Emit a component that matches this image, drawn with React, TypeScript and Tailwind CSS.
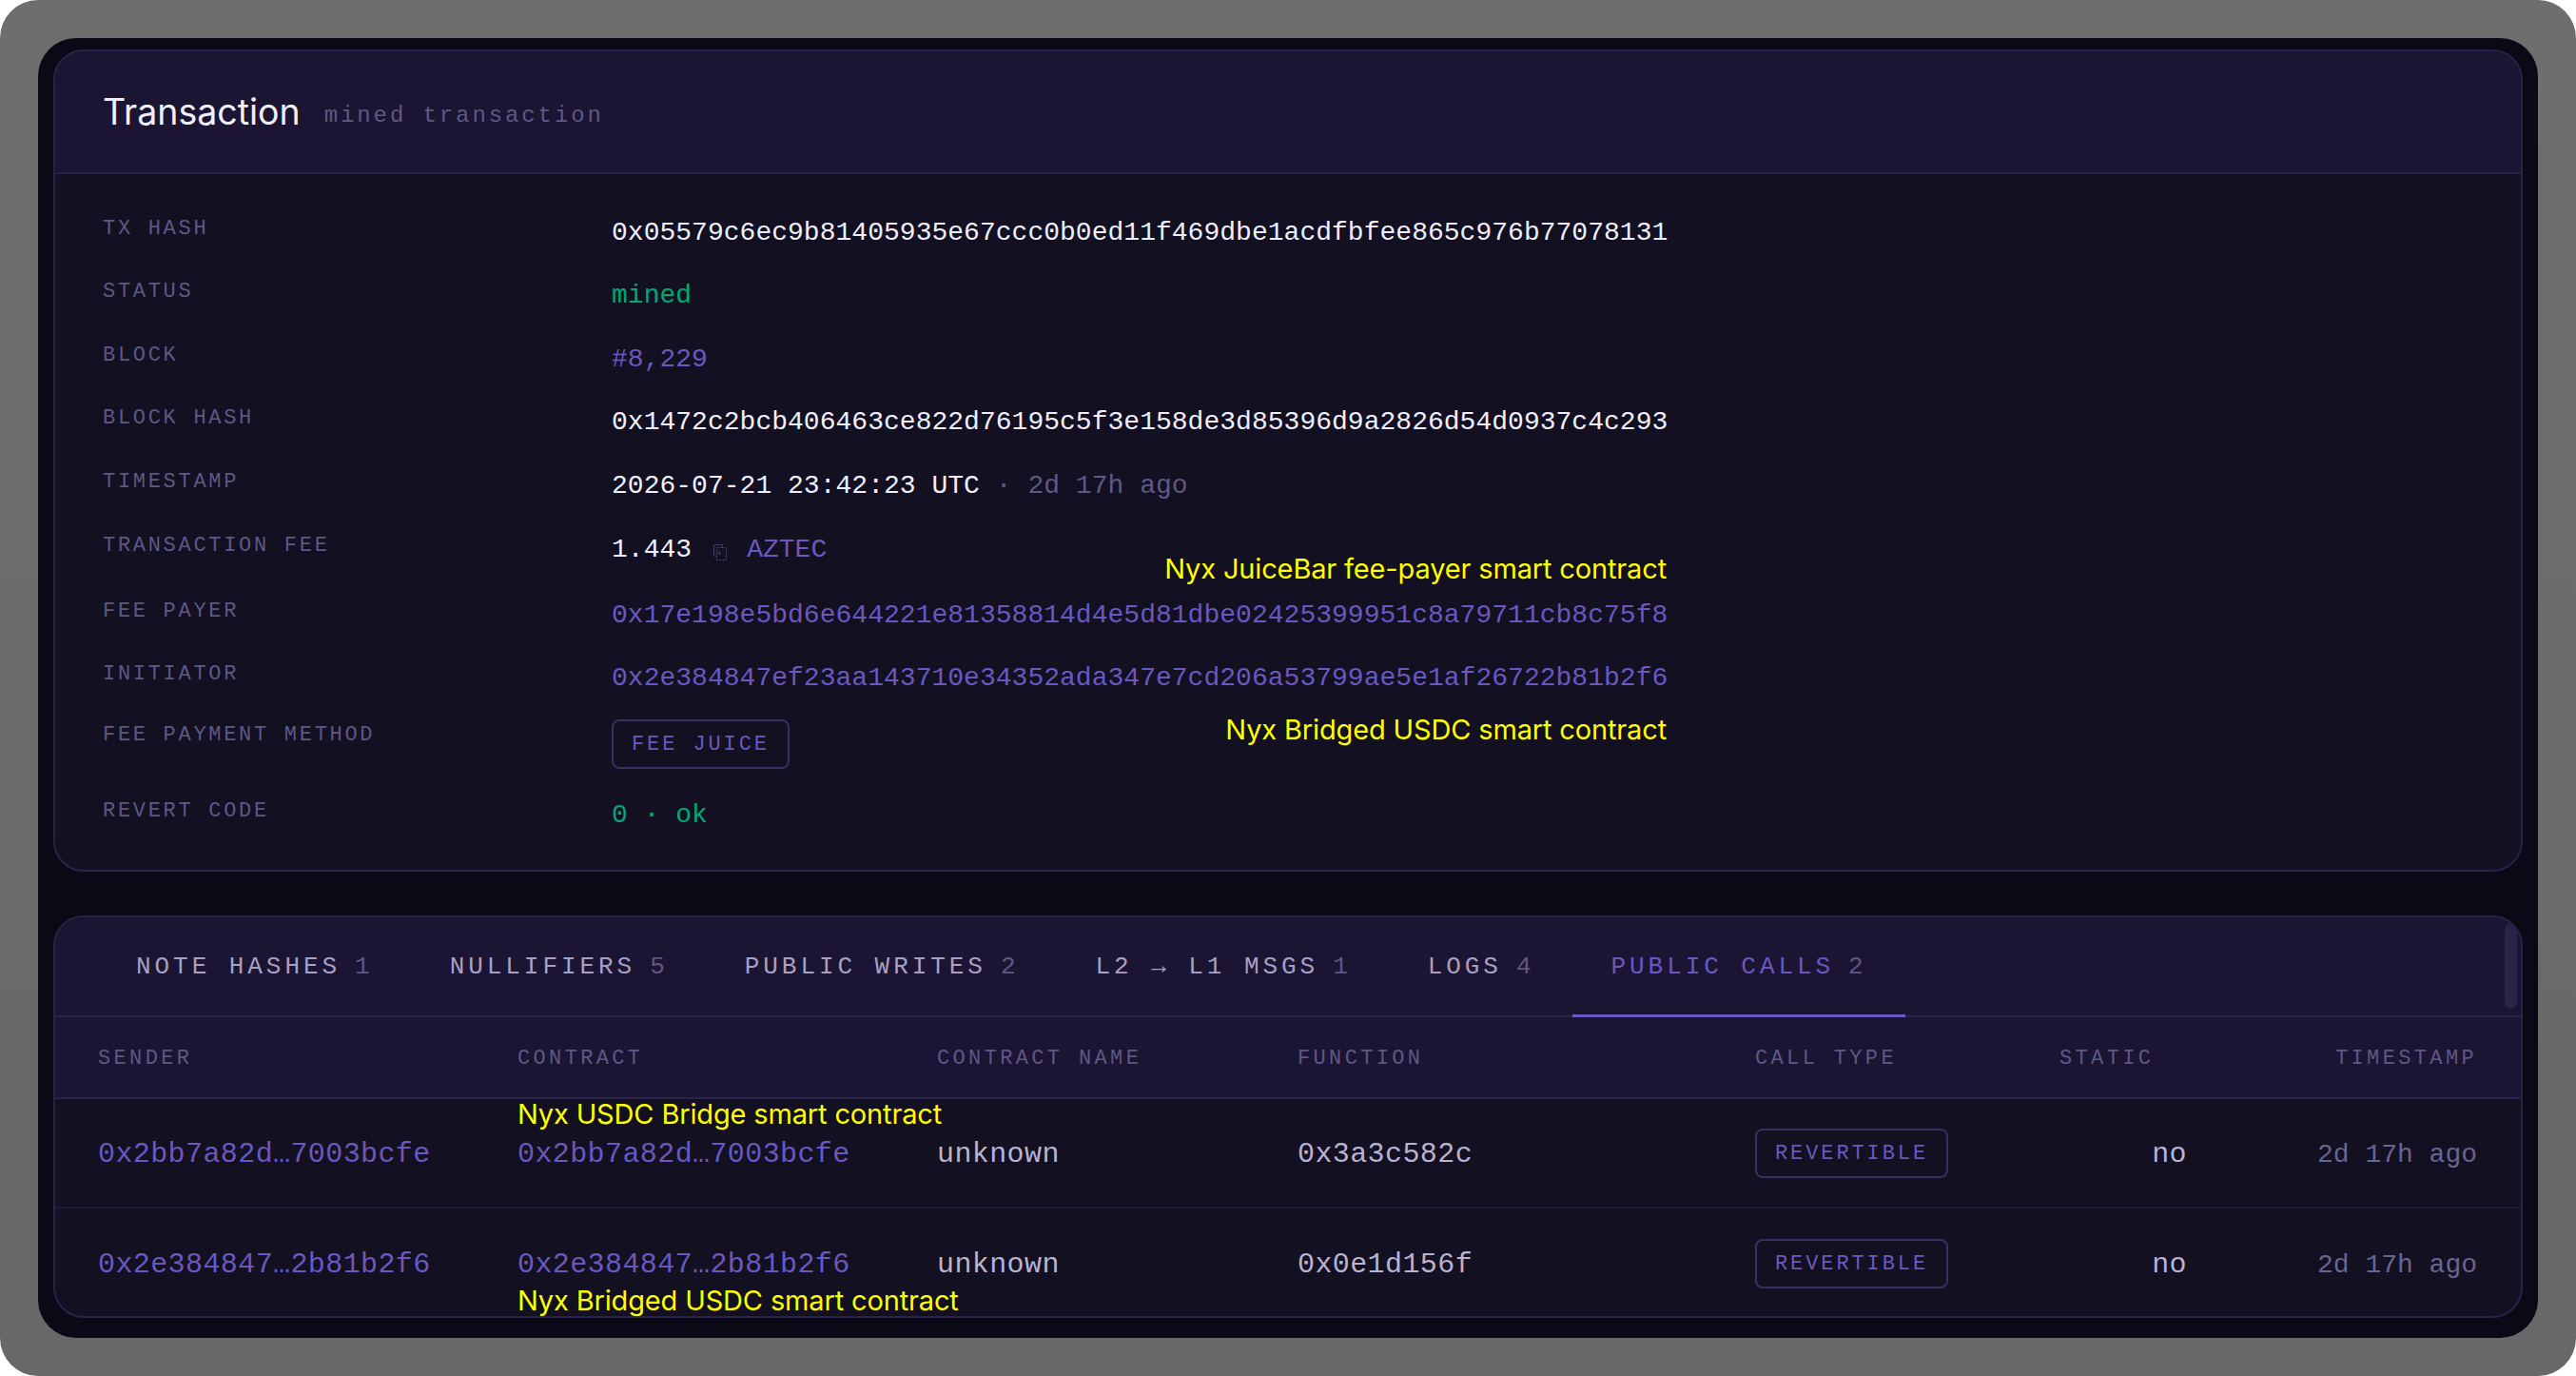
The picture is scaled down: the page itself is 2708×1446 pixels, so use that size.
import React from 'react';

const mono = "font-['Liberation_Mono',monospace]";
const inter = "font-['Inter',sans-serif]";

const Note = ({ children, className }: { children: React.ReactNode; className: string }) => (
  <span className={`absolute whitespace-nowrap ${inter} text-[29px] leading-[36px] tracking-[-0.15px] text-[#ffff00] ${className}`}>
    {children}
  </span>
);

const Badge = ({ children }: { children: React.ReactNode }) => (
  <span className="inline-flex h-[52px] items-center rounded-[8px] border-2 border-[#3a2f63] px-[19px] pt-[2px] text-[22px] tracking-[2.9px] text-[#6a58c0]">
    {children}
  </span>
);

const CopyIcon = () => (
  <svg width="14" height="17" viewBox="0 0 14 17" fill="none" stroke="#423c60" strokeWidth="1" className="ml-[23px] mr-[21px] mt-[15px]">
    <path d="M9.5 3.5V.5h-9v11.5h3" />
    <path d="M3.5 3.5h10v13h-10z" strokeDasharray="2.5 1" />
    <path d="M2.5 9h5M5.5 6.8 8 9l-2.5 2.2" />
  </svg>
);

const Row = ({ label, children, className = '' }: { label: string; children: React.ReactNode; className?: string }) => (
  <div className={`flex items-start ${className}`}>
    <div className="w-[535px] shrink-0 text-[22px] leading-[34px] tracking-[2.7px] text-[#5f5785]">{label}</div>
    <div className="relative flex w-[1112px] items-start whitespace-nowrap text-[28px] leading-[42.4px] tracking-[0.02px]">{children}</div>
  </div>
);

const TABS = [
  { name: 'NOTE HASHES', count: 1 },
  { name: 'NULLIFIERS', count: 5 },
  { name: 'PUBLIC WRITES', count: 2 },
  { name: 'L2 → L1 MSGS', count: 1 },
  { name: 'LOGS', count: 4 },
  { name: 'PUBLIC CALLS', count: 2, active: true },
];

const HEADERS = ['SENDER', 'CONTRACT', 'CONTRACT NAME', 'FUNCTION', 'CALL TYPE', 'STATIC'];

const CALLS = [
  { sender: '0x2bb7a82d…7003bcfe', fn: '0x3a3c582c', note: 'Nyx USDC Bridge smart contract', top: true },
  { sender: '0x2e384847…2b81b2f6', fn: '0x0e1d156f', note: 'Nyx Bridged USDC smart contract', top: false },
];

const cols = 'grid grid-cols-[441px_441px_379px_481px_320px_134px_1fr] items-center pl-[45px] pr-[46px]';

export default function App() {
  return (
    <div className={`h-[1446px] w-full overflow-hidden bg-white ${mono}`}>
      <div className="h-full rounded-[40px] bg-linear-to-b from-[#6e6e6e] to-[#686868] p-[40px]">
        <div className="flex h-full flex-col gap-[46px] rounded-[40px] bg-[#0c0917] px-[16px] pb-[21px] pt-[12px]">
          <section className="h-[864px] shrink-0 overflow-hidden rounded-[32px] border-2 border-[#2a2349] bg-[#121021]">
            <header className="flex h-[129px] items-center border-b-2 border-[#2a2349] bg-[#1b1533] pl-[50px]">
              <h1 className={`${inter} text-[37.5px] font-normal leading-[44px] text-[#f1eff9]`}>Transaction</h1>
              <span className="ml-[25px] mt-[8px] text-[24px] tracking-[2.9px] text-[#5f5785]">mined transaction</span>
            </header>
            <div className="flex flex-col gap-[24px] pl-[50px] pt-[41px]">
              <Row label="TX HASH"><span className="text-[#f0eefc]">0x05579c6ec9b81405935e67ccc0b0ed11f469dbe1acdfbfee865c976b77078131</span></Row>
              <Row label="STATUS"><span className="text-[#00a878]">mined</span></Row>
              <Row label="BLOCK"><span className="text-[#6a58c0]">#8,229</span></Row>
              <Row label="BLOCK HASH"><span className="text-[#f0eefc]">0x1472c2bcb406463ce822d76195c5f3e158de3d85396d9a2826d54d0937c4c293</span></Row>
              <Row label="TIMESTAMP">
                <span className="text-[#f0eefc]">2026-07-21 23:42:23 UTC</span>
                <span className="text-[#5f5785]">&nbsp;· 2d 17h ago</span>
              </Row>
              <Row label="TRANSACTION FEE" className="mt-[1px] h-[44px]">
                <span className="text-[#f0eefc]">1.443</span>
                <CopyIcon />
                <span className="text-[#6a58c0]">AZTEC</span>
              </Row>
              <Row label="FEE PAYER" className="mt-[1px]">
                <Note className="right-[3px] top-[-46px]">Nyx JuiceBar fee-payer smart contract</Note>
                <span className="text-[#6a58c0]">0x17e198e5bd6e644221e81358814d4e5d81dbe02425399951c8a79711cb8c75f8</span>
              </Row>
              <Row label="INITIATOR"><span className="text-[#6a58c0]">0x2e384847ef23aa143710e34352ada347e7cd206a53799ae5e1af26722b81b2f6</span></Row>
              <Row label="FEE PAYMENT METHOD" className="mt-[-3px]">
                <Note className="right-[3px] top-[-7px]">Nyx Bridged USDC smart contract</Note>
                <Badge>FEE JUICE</Badge>
              </Row>
              <Row label="REVERT CODE" className="mt-[4px]"><span className="text-[#00a878]">0 · ok</span></Row>
            </div>
          </section>

          <section className="relative min-h-0 flex-1 overflow-hidden rounded-[32px] border-2 border-[#2a2349] bg-[#121021]">
            <div className="flex h-[105px] items-start border-b-2 border-[#2a2349] bg-[#1b1533] pl-[45px]">
              {TABS.map((tab) => (
                <div
                  key={tab.name}
                  className={`flex h-[105px] items-center whitespace-nowrap border-b-[3px] px-[40px] pt-[2px] text-[26px] tracking-[3.95px] ${
                    tab.active ? 'border-[#6a58c0] text-[#6a58c0]' : 'border-transparent text-[#a8a0c4]'
                  }`}
                >
                  {tab.name}
                  <span className="ml-[15px] text-[#5f5785]">{tab.count}</span>
                </div>
              ))}
            </div>
            <div className="absolute right-[4px] top-[6px] h-[90px] w-[13px] rounded-full bg-[#2a2448]" />
            <div className={`${cols} h-[86px] border-b-2 border-[#2a2349] bg-[#1b1533] pt-[3px] text-[22px] tracking-[3.35px] text-[#5f5785]`}>
              {HEADERS.map((h) => (
                <div key={h}>{h}</div>
              ))}
              <div className="text-right">TIMESTAMP</div>
            </div>
            {CALLS.map((call, i) => (
              <div key={call.sender} className={`${cols} h-[115px] text-[30px] tracking-[0.4px] ${i === 0 ? 'border-b-2 border-[#211b3b]' : ''}`}>
                <div className="mt-[4px] text-[#6a58c0]">{call.sender}</div>
                <div className="relative mt-[4px] text-[#6a58c0]">
                  <Note className={call.top ? 'left-0 top-[-38px]' : 'left-0 top-[42px]'}>{call.note}</Note>
                  {call.sender}
                </div>
                <div className="mt-[4px] text-[#b9b2d2]">unknown</div>
                <div className="mt-[4px] text-[#b9b2d2]">{call.fn}</div>
                <div><Badge>REVERTIBLE</Badge></div>
                <div className="mt-[4px] text-right text-[#b9b2d2]">no</div>
                <div className="mt-[4px] text-right text-[28px] tracking-normal text-[#6b6390]">2d 17h ago</div>
              </div>
            ))}
          </section>
        </div>
      </div>
    </div>
  );
}
